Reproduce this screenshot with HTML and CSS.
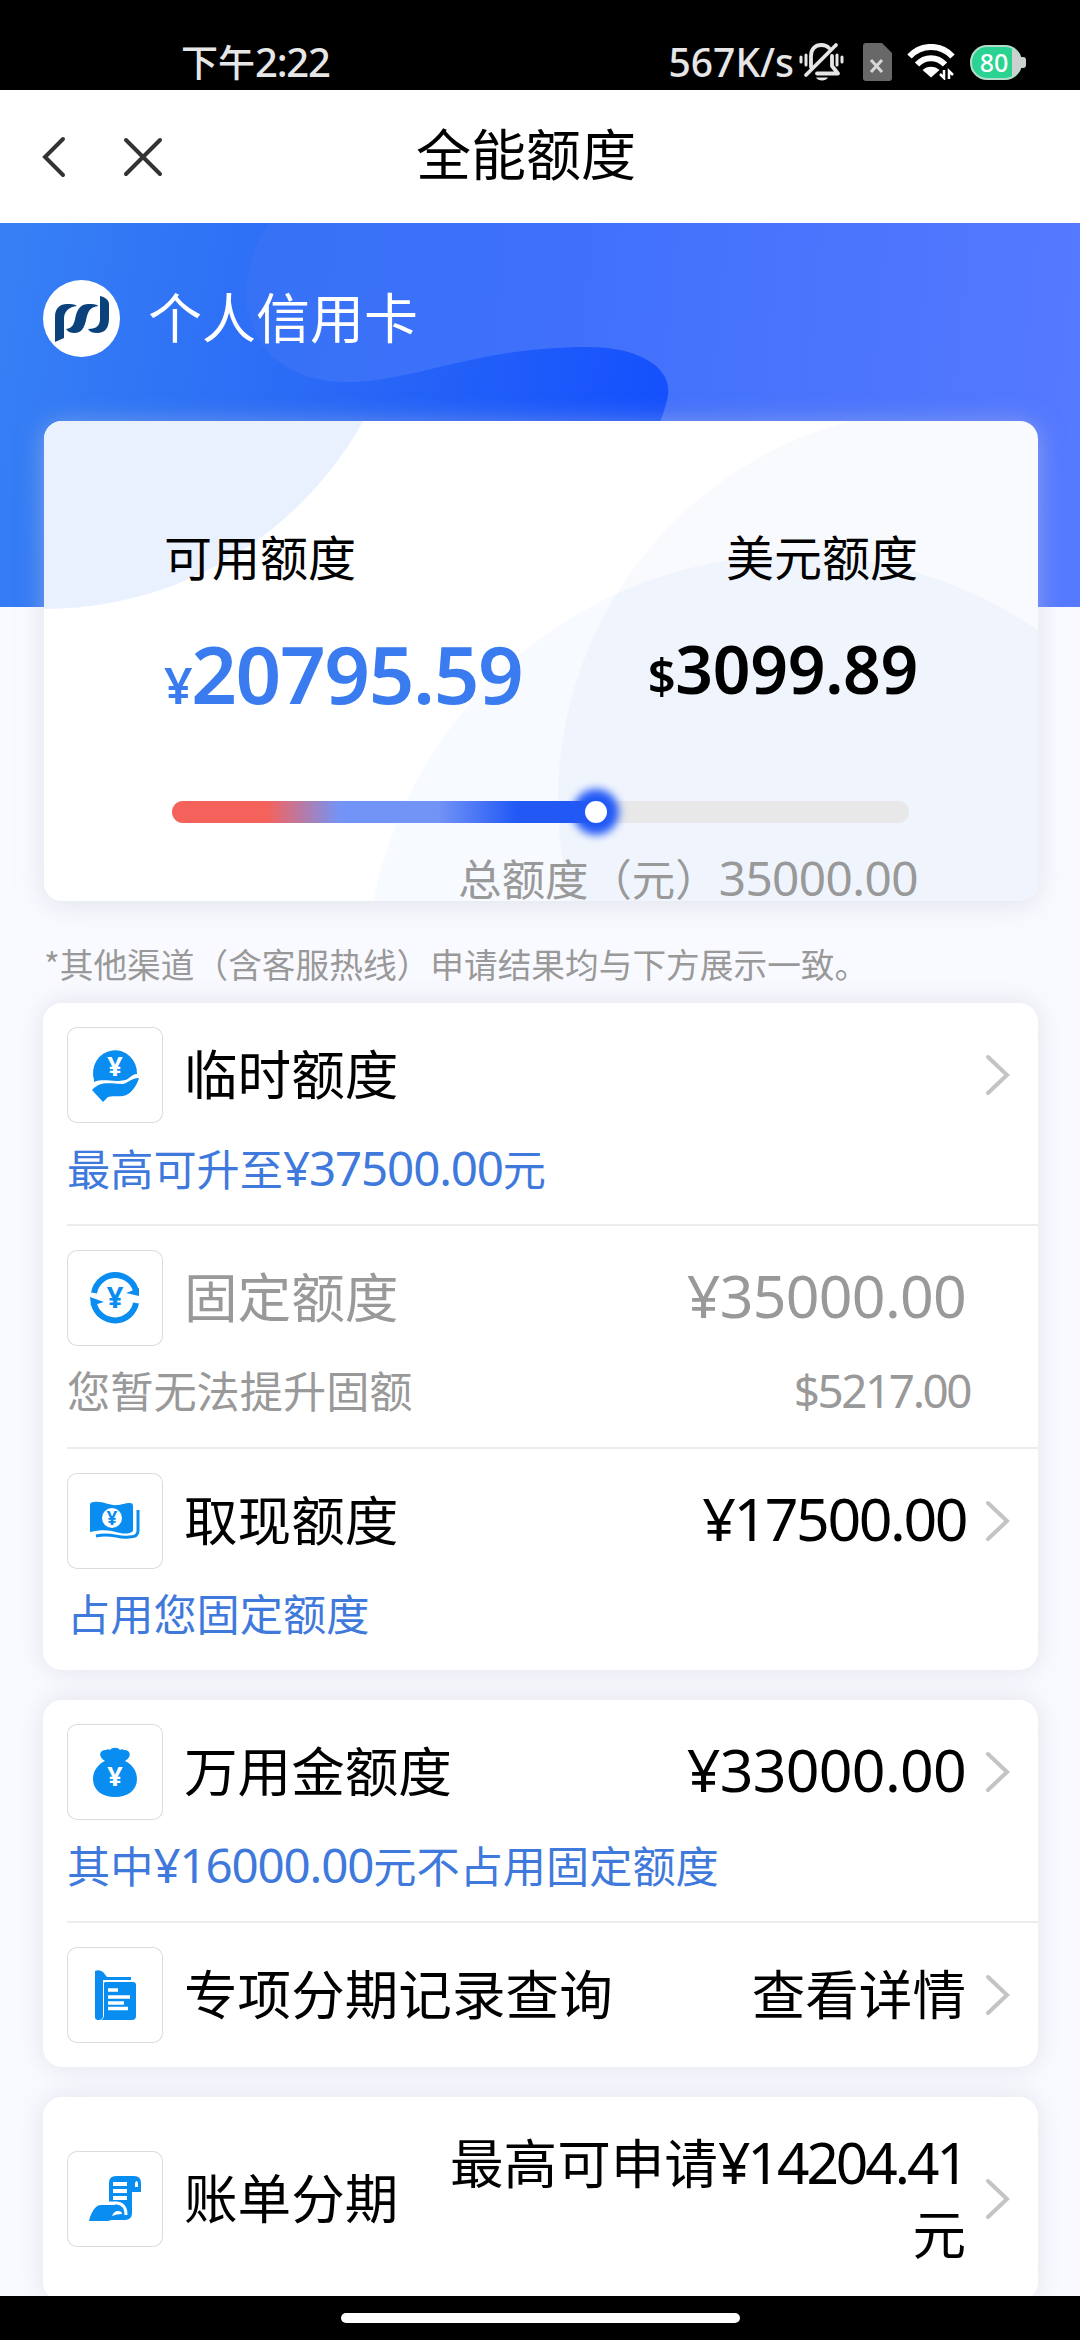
FILE: index.html
```html
<!DOCTYPE html>
<html lang="zh-CN">
<head>
    <meta charset="UTF-8">
    <meta name="viewport" content="width=device-width, initial-scale=1.0">
    <title>全能额度</title>
    <link rel="stylesheet" href="styles.css">
</head>
<body>
    <div class="status-bar">
        <div class="time">下午<span class="num">2:22</span></div>
        <div class="status-icons">
            <span class="speed">567K/s</span>
            <svg class="bell" width="46" height="40" viewBox="0 0 46 40" fill="none" stroke="#e6e6e6" stroke-width="3" stroke-linecap="round">
                <path d="M12 25V14c0-7 4-11 10.500-11 3 0 5.500 1 7.500 3M33 14v10l6 7.500H18" stroke-linejoin="round" stroke-width="3.800"/>
                <path d="M37 3L7 33" stroke-width="3.800"/>
                <path d="M2 15v5M7 13v10M38 13v10M43 15v5"/>
                <path d="M17 35.500h12c-2 4-10 4-12 0z" fill="#e6e6e6" stroke="none"/>
            </svg>
            <svg class="sim" width="29" height="38" viewBox="0 0 29 38">
                <path d="M3 0h16l10 10v25a3 3 0 0 1-3 3H3a3 3 0 0 1-3-3V3a3 3 0 0 1 3-3z" fill="#686868"/>
                <path d="M8 17l11 12M19 17L8 29" stroke="#d8d8d8" stroke-width="3"/>
            </svg>
            <svg class="wifi" width="48" height="36" viewBox="0 0 48 36" fill="none" stroke="#fff" stroke-width="6">
                <path d="M2.500 12.500C14-.3 34-.3 45.500 12.500"/>
                <path d="M10 20.500c8-8.500 20-8.500 28 0"/>
                <path d="M15.500 26c4.500-4.500 12.500-4.500 17 0l-8.500 7.500z" fill="#fff" stroke="none"/>
                <path d="M37 26v8l-4-4M42 35v-8l4 4" stroke-width="2.500"/>
            </svg>
            <div class="battery"><span>80</span></div>
        </div>
    </div>

    <div class="navbar">
        <svg class="back" width="26" height="44" viewBox="0 0 26 44"><path d="M23 4L5 22l18 18"/></svg>
        <svg class="close" width="42" height="44" viewBox="0 0 42 44"><path d="M5 5l34 34M39 5L5 39"/></svg>
        <h1>全能额度</h1>
    </div>

    <div class="page">
        <div class="banner">
            <svg class="banner-bg" width="1080" height="384" viewBox="0 0 1080 384">
                <defs>
                    <linearGradient id="base" gradientUnits="userSpaceOnUse" x1="0" y1="120" x2="660" y2="240">
                        <stop offset="0" stop-color="#367ff5"/>
                        <stop offset="0.500" stop-color="#2a69f6"/>
                        <stop offset="1" stop-color="#1550fd"/>
                    </linearGradient>
                    <linearGradient id="wave" gradientUnits="userSpaceOnUse" x1="240" y1="80" x2="1080" y2="160">
                        <stop offset="0" stop-color="#3672f5"/>
                        <stop offset="0.350" stop-color="#3f70fb"/>
                        <stop offset="1" stop-color="#5579ff"/>
                    </linearGradient>
                </defs>
                <rect width="1080" height="384" fill="url(#base)"/>
                <path d="M268 0C238 50 240 95 266 127C290 152 320 160 355 159C420 156 480 124 588 124C640 124 672 145 668 172C664 195 650 230 600 300L560 384H1080V0Z" fill="url(#wave)"/>
            </svg>
            <svg class="logo" width="77" height="77" viewBox="0 0 77 77">
                <circle cx="38.500" cy="38.500" r="38.500" fill="#fff"/>
                <path d="M12 62V37c0-9 5-13 12-13 4 0 7 0 10 2-8 1-13 5-13 13v19z" fill="#0b427c"/>
                <path d="M23 49c7-1 8-5 9.500-12 2-9 6-13 13-13 4 0 7 0 10 2-8 1-10 4-12 12-2 10-5 15-12 15-4 0-6-1-8.500-4z" fill="#0b427c"/>
                <path d="M45 49c9 0 12-4 12-10V16c5 1 9 4 9 8v14c0 10-4 15-12 15-4 0-7-1-9-4z" fill="#0b427c"/>
            </svg>
            <span class="card-type">个人信用卡</span>
        </div>

        <div class="quota">
            <svg class="quota-bg" width="994" height="480" viewBox="0 0 994 480">
                <circle cx="0" cy="-177" r="365" fill="#eaf1fe"/>
                <circle cx="751" cy="564" r="430" fill="#3f78f0" fill-opacity="0.040"/>
                <circle cx="906" cy="379" r="392" fill="#3f78f0" fill-opacity="0.035"/>
            </svg>
            <div class="quota-cols">
                <div class="quota-col">
                    <div class="label">可用额度</div>
                    <div class="amount rmb"><small>¥</small>20795.59</div>
                </div>
                <div class="quota-col right">
                    <div class="label">美元额度</div>
                    <div class="amount usd"><small>$</small>3099.89</div>
                </div>
            </div>
            <div class="slider">
                <div class="slider-fill"><i class="slider-dot"></i></div>
            </div>
            <div class="total">总额度（元）<span class="num">35000.00</span></div>
        </div>

        <p class="tip">*其他渠道（含客服热线）申请结果均与下方展示一致。</p>

        <div class="card">
            <div class="item">
                <div class="row">
                    <div class="icon">
                        <svg width="96" height="96" viewBox="0 0 96 96">
                            <path d="M27 53a22 23 0 1 1 43-6c-6 0-8 6-12 6-12 3-20-2-31 2z" fill="#0a8df0"/>
                            <text x="48" y="49" font-size="27">¥</text>
                            <path d="M25 63c8-8 13-7 30-6 6 0 8-6 17-6-2 7-8 17-16 18-5 .500-12-.500-15 1l-5 5z" fill="#0a8df0"/>
                            <path d="M27 57c8-4 18-1 29-2 6 0 7-6 15-6" fill="none" stroke="#fff" stroke-width="1.500"/>
                        </svg>
                    </div>
                    <span class="name">临时额度</span>
                    <span class="value"></span>
                    <svg class="arrow" viewBox="0 0 26 42"><path d="M3 3l19 18L3 39"/></svg>
                </div>
                <div class="desc">最高可升至<span class="num snug">¥37500.00</span>元</div>
            </div>
            <div class="item disabled">
                <div class="row">
                    <div class="icon">
                        <svg width="96" height="96" viewBox="0 0 96 96">
                            <path d="M27 43a21.500 21.500 0 0 1 42-2M69 53a21.500 21.500 0 0 1-42 1" fill="none" stroke="#0a8df0" stroke-width="6"/>
                            <path d="M59 43l13-5v8zM37 52l-14-5 1 9z" fill="#0a8df0"/>
                            <text x="48" y="58" font-size="29" class="blue">¥</text>
                        </svg>
                    </div>
                    <span class="name">固定额度</span>
                    <span class="value"><span class="num">¥35000.00</span></span>
                    <i class="arrow"></i>
                </div>
                <div class="desc">您暂无法提升固额<span class="num usd-quota">$5217.00</span></div>
            </div>
            <div class="item">
                <div class="row">
                    <div class="icon">
                        <svg width="96" height="96" viewBox="0 0 96 96">
                            <path d="M23 32c0-2 1-3 4-3 10-1 15 4 24 3 6-1 8-2 12-2q3 0 3 3v25c-3 3-8 3-13 2-10-3-17-4-30-1z" fill="#0a8df0"/>
                            <circle cx="45" cy="45" r="10" fill="#fff"/>
                            <text x="45" y="52" font-size="19" class="blue">¥</text>
                            <path d="M71 37v21c0 5-4 6-9 6-11 2-17-5-33-1" fill="none" stroke="#0a8df0" stroke-width="3"/>
                        </svg>
                    </div>
                    <span class="name">取现额度</span>
                    <span class="value"><span class="num tight">¥17500.00</span></span>
                    <svg class="arrow" viewBox="0 0 26 42"><path d="M3 3l19 18L3 39"/></svg>
                </div>
                <div class="desc">占用您固定额度</div>
            </div>
        </div>

        <div class="card">
            <div class="item">
                <div class="row">
                    <div class="icon">
                        <svg width="96" height="96" viewBox="0 0 96 96">
                            <path d="M38 37c-7-4-6-11 1-11 1-1 3-1 4 0 2-3 8-3 10 0 1-1 3-1 4 0 7 0 8 7 1 11 7 3 12 10 12 18 0 11-9 18-22 18s-22-7-22-18c0-8 5-15 12-18z" fill="#0a8df0"/>
                            <text x="48" y="62" font-size="27">¥</text>
                        </svg>
                    </div>
                    <span class="name">万用金额度</span>
                    <span class="value"><span class="num">¥33000.00</span></span>
                    <svg class="arrow" viewBox="0 0 26 42"><path d="M3 3l19 18L3 39"/></svg>
                </div>
                <div class="desc">其中<span class="num snug">¥16000.00</span>元不占用固定额度</div>
            </div>
            <div class="item">
                <div class="row">
                    <div class="icon">
                        <svg width="96" height="96" viewBox="0 0 96 96">
                            <path d="M28 24q4-2 8 1l4 5h24v3H36v37q-1 3-4 3h-1q-3 0-3-3z" fill="#0a8df0"/>
                            <path d="M38 35h28q3 0 3 3v31q0 4-4 4H34q3-1 3-5V36z" fill="#0a8df0"/>
                            <path d="M41 43h10M41 50h22M41 56h16M41 61.500h20" stroke="#fff" stroke-width="3.500"/>
                        </svg>
                    </div>
                    <span class="name">专项分期记录查询</span>
                    <span class="value">查看详情</span>
                    <svg class="arrow" viewBox="0 0 26 42"><path d="M3 3l19 18L3 39"/></svg>
                </div>
            </div>
        </div>

        <div class="card">
            <div class="item">
                <div class="row tall">
                    <div class="icon">
                        <svg width="96" height="96" viewBox="0 0 96 96">
                            <path d="M42 52V32q0-7 7-7h18q7 0 7 7v9h-9v21q0 7-7 7H48V52z" fill="#0a8df0"/>
                            <path d="M68 36v-4q1.500-4 3 0v4z" fill="#fff"/>
                            <path d="M22 70c1-6 4-11 7-14q2-2 5-2h15q10 0 9 13-5 2-14 2-2 1-4 1z" fill="#0a8df0"/>
                            <path d="M46 33h14M46 40h14M46 47h14" stroke="#fff" stroke-width="4"/>
                            <path d="M42 52h8q9 1 9 12" stroke="#fff" stroke-width="3" fill="none"/>
                            <path d="M45 65q2-5 6-5 4 0 4 3-5 0-10 2z" fill="#fff"/>
                        </svg>
                    </div>
                    <span class="name">账单分期</span>
                    <span class="value">最高可申请<span class="num tighter">¥14204.41</span>元</span>
                    <svg class="arrow" viewBox="0 0 26 42"><path d="M3 3l19 18L3 39"/></svg>
                </div>
            </div>
        </div>
    </div>

    <div class="home-bar"><span></span></div>
</body>
</html>
```
FILE: styles.css
```css
* {
    box-sizing: border-box;
}
body {
    margin: 0;
    width: 1080px;
    height: 2340px;
    display: flex;
    flex-direction: column;
    overflow: hidden;
    background: #000;
    color: #000;
    font-family: "Noto Sans CJK SC", sans-serif;
}
svg {
    display: block;
    flex: none;
}
i {
    display: block;
}

.num {
    font-family: "Noto Sans", sans-serif;
    font-size: 1.1em;
    line-height: 1;
    letter-spacing: -0.012em;
}
.snug {
    letter-spacing: -0.024em;
}
.tight {
    letter-spacing: -0.041em;
}
.tighter {
    font-size: 1.06em;
    letter-spacing: -0.053em;
}

/* status bar */
.status-bar {
    height: 90px;
    flex: none;
    padding: 34px 58px 0 181px;
    display: flex;
    justify-content: space-between;
    color: #e6e6e6;
}
.time {
    font-size: 37px;
    font-weight: 500;
    line-height: 54px;
}
.time .num {
    font-size: 40px;
    letter-spacing: -1.200px;
}
.status-icons {
    display: flex;
    height: 56px;
    align-items: center;
}
.speed {
    font-family: "Noto Sans", sans-serif;
    font-size: 39px;
    font-weight: 500;
    line-height: 56px;
    margin-top: -1px;
}
.bell {
    margin-left: 5px;
}
.sim {
    margin-left: 18px;
}
.wifi {
    margin-left: 15px;
}
.battery {
    position: relative;
    margin-left: 15px;
    width: 52px;
    height: 35px;
    border-radius: 17px;
    border: 2px solid #b4dccb;
    background: linear-gradient(90deg, #2bd392 40px, #cfcfcf 40px);
    font: 500 25px/31px "Noto Sans", sans-serif;
    color: #fff;
    text-align: center;
}
.battery::after {
    content: '';
    position: absolute;
    right: -6px;
    top: 10px;
    width: 5px;
    height: 11px;
    border-radius: 0 3px 3px 0;
    background: #cfcfcf;
}
.battery span {
    display: block;
    width: 44px;
}

/* title bar */
.navbar {
    position: relative;
    height: 133px;
    flex: none;
    display: flex;
    align-items: center;
    padding-left: 40px;
    background: #fff;
}
.navbar path {
    fill: none;
    stroke: #333;
    stroke-width: 4;
    stroke-linecap: round;
}
.close {
    margin-left: 55px;
}
.navbar h1 {
    position: absolute;
    top: 0;
    left: 0;
    right: 0;
    margin: 0;
    padding-right: 28px;
    text-align: center;
    font-size: 55px;
    font-weight: 400;
    line-height: 122px;
}

.page {
    flex: 1;
    overflow: hidden;
    background: #f9faff;
}
.banner {
    position: relative;
    height: 384px;
    display: flex;
    align-items: flex-start;
    padding: 57px 43px 0;
}
.banner-bg {
    position: absolute;
    left: 0;
    top: 0;
}
.logo {
    position: relative;
}
.card-type {
    position: relative;
    margin-left: 28px;
    color: #fff;
    font-size: 54px;
    line-height: 71px;
}

/* available quota */
.quota {
    position: relative;
    width: 994px;
    height: 480px;
    margin: -186px 0 0 44px;
    padding: 102px 120px 0 120px;
    border-radius: 18px;
    background: #fff;
    box-shadow: 0 3px 26px rgba(200, 205, 215, 0.5);
}
.quota-bg {
    position: absolute;
    left: 0;
    top: 0;
    border-radius: 18px;
}
.quota-cols {
    position: relative;
    display: flex;
    justify-content: space-between;
    height: 278px;
}
.label {
    font-size: 48px;
    line-height: 64px;
}
.right {
    text-align: right;
}
.amount {
    font-family: "Noto Sans", sans-serif;
    font-weight: 600;
    line-height: 96px;
    white-space: nowrap;
}
.rmb {
    margin-top: 38px;
    font-size: 80px;
    letter-spacing: -1.400px;
    color: #3a7cf0;
}
.rmb small {
    font-size: 50px;
}
.usd {
    margin-top: 33px;
    font-size: 66px;
    letter-spacing: -0.300px;
}
.usd small {
    font-size: 49px;
}
.slider {
    position: relative;
    width: 737px;
    height: 22px;
    margin-left: 8px;
    border-radius: 11px;
    background: #e8e8e8;
}
.slider-fill {
    position: relative;
    width: 424px;
    height: 22px;
    border-radius: 11px;
    background: linear-gradient(90deg, #f5625b 0 95px, #7394f7 168px 265px, #2259f5 345px);
}
.slider-dot {
    position: absolute;
    right: -11px;
    top: 0;
    width: 22px;
    height: 22px;
    border-radius: 50%;
    background: #fff;
    box-shadow: 0 0 8px 12px #2259f5;
}
.total {
    position: relative;
    margin-top: 23px;
    text-align: right;
    font-size: 43.400px;
    line-height: 62px;
    color: #999;
}

.tip {
    margin: 37px 0 0 44px;
    font-size: 33.700px;
    line-height: 52px;
    color: #999;
}

/* quota list */
.card {
    width: 995px;
    margin: 13px 0 30px 43px;
    border-radius: 19px;
    background: #fff;
    box-shadow: 0 0 26px rgba(190, 195, 205, 0.4);
}
.card + .card {
    margin-top: 0;
}
.item {
    margin-left: 24px;
    border-bottom: 2px solid #ececec;
}
.item:last-child {
    border-bottom: none;
}
.row {
    display: flex;
    align-items: center;
    height: 144px;
    padding-right: 27px;
}
.row.tall {
    height: 204px;
}
.icon {
    width: 96px;
    height: 96px;
    flex: none;
    border-radius: 10px;
    box-shadow: inset 0 0 0 1px #dcdcdc;
}
.icon text {
    fill: #fff;
    text-anchor: middle;
    font-family: "Noto Sans", sans-serif;
    font-weight: 700;
}
.icon .blue {
    fill: #0a8df0;
}
.name {
    margin: 0 0 8px 21px;
    flex: none;
    font-size: 53.600px;
    line-height: 71px;
}
.value {
    flex: 1;
    margin: 0 19px 7px 30px;
    text-align: right;
    font-size: 53.600px;
    line-height: 71px;
}
.arrow {
    width: 26px;
    height: 42px;
    flex: none;
}
.arrow path {
    fill: none;
    stroke: #c4c4c4;
    stroke-width: 4;
    stroke-linecap: round;
}
.desc {
    display: flex;
    align-items: baseline;
    height: 80px;
    margin-top: -3px;
    padding-right: 68px;
    font-size: 43.200px;
    line-height: 44px;
    color: #4079dc;
}
.usd-quota {
    margin-left: auto;
    font-size: 1.06em;
    letter-spacing: -0.053em;
}
.disabled,
.disabled .desc {
    color: #999;
}

.home-bar {
    height: 44px;
    flex: none;
    display: flex;
    justify-content: center;
    padding-top: 17px;
}
.home-bar span {
    width: 399px;
    height: 10px;
    border-radius: 5px;
    background: #fff;
}
```
